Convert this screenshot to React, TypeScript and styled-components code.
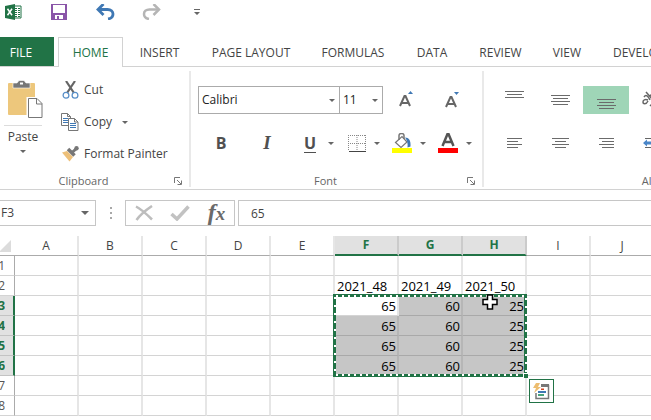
import React from "react";
import styled, { createGlobalStyle, css } from "styled-components";

const GREEN = "#217346";

const GlobalStyle = createGlobalStyle`
  *, *::before, *::after { box-sizing: border-box; }
  body {
    margin: 0;
    background: #fff;
    color: #444;
    font-family: "Open Sans", "Noto Sans", sans-serif;
    font-size: 12px;
    line-height: 16px;
    overflow: hidden;
  }
  button, input, select {
    font: inherit;
    color: inherit;
    margin: 0;
    padding: 0;
    border: 0;
    background: none;
    border-radius: 0;
    outline: 0;
  }
  svg { display: block; flex: none; }
`;

const Window = styled.div`
  display: flex;
  flex-direction: column;
  height: 100vh;
  overflow: hidden;
`;

const QuickBar = styled.header`
  display: flex;
  align-items: flex-start;
  gap: 26px;
  height: 37px;
  padding: 2px 3px;
`;

const QuickButton = styled.button`
  display: flex;
  width: 20px;
  height: 20px;
  align-items: center;
  justify-content: center;
`;

const TabBar = styled.nav`
  display: flex;
  height: 30px;
  flex: none;
  border-bottom: 1px solid #d2d2d2;
`;

const Tab = styled.button<{ $width: number; $kind?: "file" | "active" }>`
  flex: none;
  width: ${(p) => p.$width}px;
  height: 29px;
  padding-top: 2px;
  white-space: nowrap;
  color: #444;
  ${(p) =>
    p.$kind === "file" &&
    css`
      background: ${GREEN};
      color: #fff;
      margin-right: 4px;
      padding-right: 12px;
    `}
  ${(p) =>
    p.$kind === "active" &&
    css`
      height: 30px;
      padding-top: 0;
      color: ${GREEN};
      background: #fff;
      border: 1px solid #d2d2d2;
      border-bottom: 0;
    `}
`;

const Ribbon = styled.section`
  display: flex;
  flex: none;
  height: 123px;
  padding-top: 4px;
  border-bottom: 1px solid #d2d2d2;
`;

const Group = styled.section<{ $width?: number }>`
  display: flex;
  flex-direction: column;
  flex: ${(p) => (p.$width ? `0 0 ${p.$width}px` : "1 0 392px")};
  height: 116px;
  border-right: 2px solid #e9e9e9;
`;

const GroupBody = styled.div<{ $column?: boolean }>`
  display: flex;
  flex: 1;
  min-height: 0;
  flex-direction: ${(p) => (p.$column ? "column" : "row")};
`;

const GroupFooter = styled.footer`
  display: grid;
  grid-template-columns: 1fr 22px;
  align-items: center;
  height: 13px;
  font-size: 11px;
  line-height: 13px;
  color: #666;
  text-align: center;
`;

const Launcher = styled.button`
  display: flex;
  justify-content: center;
`;

const PasteButton = styled.button`
  display: flex;
  flex-direction: column;
  align-items: center;
  width: 46px;
  padding-top: 9px;
`;

const PasteLabel = styled.span`
  display: flex;
  flex-direction: column;
  align-items: center;
  gap: 5px;
  width: 38px;
  margin-top: 5px;
  padding-top: 3px;
  border-top: 1px solid #dcdcdc;
`;

const ClipboardList = styled.div`
  display: flex;
  flex-direction: column;
  padding: 3px 0 0 15px;
`;

const ClipboardCommand = styled.button`
  display: flex;
  align-items: center;
  gap: 5px;
  height: 32px;
  white-space: nowrap;
`;

const MenuMark = styled.span`
  padding-left: 5px;
`;

const FontFields = styled.div`
  display: flex;
  align-items: center;
  padding: 15px 0 0 7px;
  height: 43px;
`;

const Combo = styled.label<{ $width: number }>`
  display: flex;
  align-items: center;
  flex: none;
  width: ${(p) => p.$width}px;
  height: 28px;
  margin-right: -1px;
  padding: 0 4px 0 3px;
  border: 1px solid #ababab;
  color: #222;
`;

const ComboInput = styled.input`
  flex: 1;
  min-width: 0;
`;

const ToolButton = styled.button<{ $width: number }>`
  display: flex;
  align-items: center;
  justify-content: center;
  flex: none;
  width: ${(p) => p.$width}px;
  height: 28px;
`;

const SplitToolButton = styled.button<{ $gap?: number }>`
  display: flex;
  align-items: center;
  justify-content: flex-end;
  flex: none;
  gap: ${(p) => p.$gap ?? 8}px;
  width: 46px;
  height: 28px;
  padding-right: 2px;
`;

const FontTools = styled.div`
  display: flex;
  padding: 15px 0 0 7px;
`;

const Letter = styled.span<{ $style: "bold" | "italic" | "underline" }>`
  font-size: 16px;
  line-height: 18px;
  font-weight: 700;
  color: #505050;
  ${(p) =>
    p.$style === "italic" &&
    css`
      font-family: "Liberation Serif", serif;
      font-style: italic;
      font-size: 19px;
    `}
  ${(p) => p.$style === "underline" && css`border-bottom: 1px solid #505050;`}
`;

const AlignGrid = styled.div`
  display: grid;
  grid-template-columns: repeat(4, 46px);
  grid-auto-rows: 28px;
  row-gap: 15px;
  padding: 15px 0 0 7px;
`;

const AlignButton = styled.button<{ $on?: boolean }>`
  display: flex;
  align-items: center;
  justify-content: center;
  background: ${(p) => (p.$on ? "#9fd5b7" : "transparent")};
`;

const FormulaBar = styled.section`
  display: flex;
  flex: none;
  height: 46px;
  padding: 10px 0;
`;

const NameBox = styled.label`
  display: flex;
  align-items: center;
  width: 96px;
  height: 26px;
  padding: 0 6px 0 1px;
  border: 1px solid #c6c6c6;
  border-left: 0;
`;

const Grip = styled.div`
  display: flex;
  flex-direction: column;
  align-items: center;
  justify-content: center;
  gap: 3px;
  width: 29px;
  height: 26px;
`;

const Dot = styled.i`
  width: 2px;
  height: 2px;
  background: #a8a8a8;
`;

const FormulaButtons = styled.div`
  display: flex;
  align-items: center;
  justify-content: space-around;
  width: 110px;
  height: 26px;
  margin-right: 3px;
  border: 1px solid #c6c6c6;
`;

const FormulaInput = styled.input`
  flex: 1;
  min-width: 0;
  height: 26px;
  padding-left: 12px;
  border: 1px solid #c6c6c6;
  border-right: 0;
`;

const Sheet = styled.main`
  position: relative;
  flex: 1;
  overflow: hidden;
`;

const Grid = styled.table`
  table-layout: fixed;
  border-collapse: separate;
  border-spacing: 0;
  width: 655px;
`;

const Corner = styled.th`
  width: 15px;
  height: 20px;
  padding: 0;
  border-bottom: 1px solid #ababab;
`;

const ColumnHead = styled.th<{ $on: boolean }>`
  width: 64px;
  height: 20px;
  padding: 0;
  font-weight: ${(p) => (p.$on ? 700 : 400)};
  color: ${(p) => (p.$on ? GREEN : "#444")};
  background: ${(p) => (p.$on ? "#e1e1e1" : "#fff")};
  border-right: 2px solid ${(p) => (p.$on ? "#cbcbcb" : "#e6e6e6")};
  border-bottom: ${(p) => (p.$on ? `2px solid ${GREEN}` : "1px solid #ababab")};
`;

const RowHead = styled.th<{ $on: boolean }>`
  height: 20px;
  padding: 0;
  font-weight: ${(p) => (p.$on ? 700 : 400)};
  color: ${(p) => (p.$on ? GREEN : "#555")};
  background: ${(p) => (p.$on ? "#e1e1e1" : "#fff")};
  border-bottom: 1px solid ${(p) => (p.$on ? "#c3c3c3" : "#d4d4d4")};
  border-right: ${(p) => (p.$on ? `2px solid ${GREEN}` : "1px solid #ababab")};
`;

const RowNumber = styled.span`
  display: flex;
  justify-content: flex-end;
  width: 5px;
  overflow: hidden;
`;

const Cell = styled.td<{ $fill: "none" | "active" | "selected"; $numeric: boolean }>`
  height: 20px;
  padding: 2px 1px 1px 2px;
  font-size: 13px;
  line-height: 16px;
  color: #000;
  white-space: nowrap;
  text-align: ${(p) => (p.$numeric ? "right" : "left")};
  background: ${(p) => (p.$fill === "selected" ? "#c6c6c6" : "#fff")};
  border-right: 2px solid ${(p) => (p.$fill === "selected" ? "#b6b6b6" : "#e6e6e6")};
  border-bottom: 1px solid ${(p) => (p.$fill === "selected" ? "#a9a9a9" : "#d4d4d4")};
`;

const Marquee = styled.svg`
  position: absolute;
  left: 333px;
  top: 58px;
`;

const Pointer = styled.svg`
  position: absolute;
  left: 482px;
  top: 58px;
`;

const QuickAnalysis = styled.button`
  position: absolute;
  left: 529px;
  top: 143px;
  display: flex;
  align-items: center;
  justify-content: center;
  width: 25px;
  height: 24px;
  background: #fff;
  border: 1px solid ${GREEN};
`;

const Caret = ({ large }: { large?: boolean }) => (
  <svg width={large ? 8 : 6} height={large ? 4 : 3} viewBox="0 0 6 3" aria-hidden="true">
    <path d="M0 0h6L3 3z" fill="#666" />
  </svg>
);

const LauncherIcon = () => (
  <svg width="8" height="8" viewBox="0 0 8 8" fill="none" stroke="#777" aria-hidden="true">
    <path d="M.5 6V.5H6M3 3l4 4M7.5 3.5v4h-4" />
  </svg>
);

const ExcelIcon = () => (
  <svg width="17" height="16" viewBox="0 0 17 16" aria-hidden="true">
    <path d="M9 2h7v12H9z" fill="#fff" stroke="#217346" />
    <path d="M10 4h2v1h-2zM13 4h2v1h-2zM10 6h2v1h-2zM13 6h2v1h-2zM10 8h2v1h-2zM13 8h2v1h-2zM10 10h2v1h-2zM13 10h2v1h-2zM10 12h2v1h-2zM13 12h2v1h-2z" fill="#217346" />
    <path d="M0 2l10-2v16L0 14z" fill="#217346" />
    <path d="M2.5 4.8l4.500 6.400M7 4.800l-4.500 6.400" stroke="#fff" strokeWidth="1.500" />
  </svg>
);

const SaveIcon = () => (
  <svg width="16" height="16" viewBox="0 0 16 16" aria-hidden="true">
    <path d="M0 0h16v16H0z" fill="#8a55a8" />
    <path d="M2 1h12v8H2zM4 11h8v4H8v-3H6v3H4z" fill="#fff" />
  </svg>
);

const UndoIcon = () => (
  <svg width="19" height="16" viewBox="0 0 19 16" fill="none" stroke="#3f78b4" aria-hidden="true">
    <path d="M2 5.500h9.500c3.500 0 5.500 2 5.500 4.500 0 2.800-2 4.500-5 5" strokeWidth="2.800" />
    <path d="M7.500 0L2 5.500 7.500 11" strokeWidth="2.800" />
  </svg>
);

const RedoIcon = () => (
  <svg width="19" height="16" viewBox="0 0 19 16" fill="none" stroke="#b5b5b5" aria-hidden="true">
    <path d="M17 5.500H7.500C4 5.500 2 7.500 2 10c0 2.800 2 4.500 5 5" strokeWidth="2.500" />
    <path d="M11.500 0L17 5.500 11.500 11" strokeWidth="2.500" />
  </svg>
);

const CustomizeIcon = () => (
  <svg width="6" height="7" viewBox="0 0 6 7" aria-hidden="true">
    <path d="M0 0h6v1H0zM0 3h6L3 6z" fill="#666" />
  </svg>
);

const PasteIcon = () => (
  <svg width="42" height="40" viewBox="-6 -1 42 40" aria-hidden="true">
    <path d="M1 2h25q1 0 1 1v31H1q-1 0-1-1V3q0-1 1-1z" fill="#edc77c" />
    <path d="M5 7V2h4l2-2.500h5L18 2h4v5z" fill="#777" stroke="#fff" strokeWidth=".6" />
    <path d="M12 1.500h3v2h-3z" fill="#fff" />
    <path d="M20 17.500h9l5 5v13.500H20z" fill="#fff" stroke="#fff" strokeWidth="3" />
    <path d="M20.500 17.500h8.500l5 5v14H20.500zM28.500 17.500v5.500h5.500" fill="#fff" stroke="#777" />
  </svg>
);

const CutIcon = () => (
  <svg width="18" height="18" viewBox="0 0 18 18" fill="none" aria-hidden="true">
    <path d="M5 0l8 12M14 0L6 12" stroke="#666" strokeWidth="2.200" />
    <circle cx="5" cy="14.300" r="2.900" stroke="#5a90c8" strokeWidth="1.300" />
    <circle cx="14" cy="14.300" r="2.900" stroke="#5a90c8" strokeWidth="1.300" />
  </svg>
);

const CopyIcon = () => (
  <svg width="18" height="18" viewBox="0 0 18 18" aria-hidden="true">
    <path d="M.5.500h6l3 3v9H.500zM6.500.500v3h3" fill="#fff" stroke="#777" />
    <path d="M2 5.500h5M2 7.500h5M2 9.500h5" stroke="#3f78b4" />
    <path d="M7.500 5.500h6l3.500 3.500v8.500H7.500zM13.500 5.500V9H17" fill="#fff" stroke="#777" />
    <path d="M9 10.500h6M9 12.500h6M9 14.500h6" stroke="#3f78b4" />
  </svg>
);

const PainterIcon = () => (
  <svg width="18" height="16" viewBox="0 0 18 16" aria-hidden="true">
    <path d="M1 6.500l5-1.500 6 6-3.500 4.500z" fill="#edc07a" />
    <path d="M7 3l6.500 6.500" stroke="#777" strokeWidth="3.500" />
    <path d="M11 6.500l4.500-4" stroke="#777" strokeWidth="3" />
    <circle cx="15.500" cy="2.300" r="2.200" fill="#777" />
  </svg>
);

const FontSizeIcon = ({ grow }: { grow?: boolean }) => (
  <svg width="16" height="18" viewBox="0 0 16 18" aria-hidden="true">
    <path d={grow ? "M2 15L6.500 5h1L12 15M4 12h6" : "M2 16L6.500 6h1L12 16M4 13h6"} fill="none" stroke="#666" strokeWidth="2" />
    <path d={grow ? "M10 3h5l-2.500-3z" : "M10 1h5l-2.500 3z"} fill="#3f78b4" />
  </svg>
);

const BordersIcon = () => (
  <svg width="18" height="17" viewBox="0 0 18 17" fill="none" stroke="#888" aria-hidden="true">
    <path d="M0 .500h18M0 8.500h18M.500 0v16M9 0v16M17.500 0v16" strokeDasharray="1 1" />
    <path d="M1 16.500h17" stroke="#444" />
  </svg>
);

const FillIcon = () => (
  <svg width="20" height="20" viewBox="0 0 20 20" fill="none" aria-hidden="true">
    <path d="M3.500 9.500L10 3.500l5 5.500-6 5.500z" stroke="#777" strokeWidth="1.200" />
    <path d="M7 7V2.500C7-.2 12-.2 12 2.500V6" stroke="#777" strokeWidth="1.500" />
    <path d="M13 4.500c4 0 6 3 5.500 9l-3 1c.5-4-.2-7-2.500-10z" fill="#3f78b4" />
    <path d="M0 15h20v5H0z" fill="#ff0" />
  </svg>
);

const FontColorIcon = () => (
  <svg width="20" height="20" viewBox="0 0 20 20" fill="none" aria-hidden="true">
    <path d="M4.500 13L9.500 1h1l5 12M6.500 9h7" stroke="#555" strokeWidth="2.500" />
    <path d="M0 15h20v5H0z" fill="#f00" />
  </svg>
);

type Line = [number, number];
const LinesIcon = ({ lines, shift = 0 }: { lines: Line[]; shift?: number }) => (
  <svg width="19" height="24" viewBox="0 0 19 24" fill="none" stroke="#6b6b6b" aria-hidden="true">
    {lines.map(([x, w], i) => (
      <path key={i} d={`M${x} ${shift + i * 3 + 0.5}h${w}`} />
    ))}
  </svg>
);

const OrientationIcon = () => (
  <svg width="20" height="20" viewBox="0 0 20 20" fill="none" stroke="#666" strokeWidth="1.500" aria-hidden="true">
    <path d="M2 7c2-3 4-1 6 3M6 10c-3-1-5 0-5 2s3 3 5-1M4 2l8 9M8 6c2-3 5-1 4 1s-2 2-3 1" />
    <path d="M8 16L18 6" />
  </svg>
);

const IndentIcon = () => (
  <svg width="18" height="12" viewBox="0 0 18 12" fill="none" aria-hidden="true">
    <path d="M2 1.500h14M9 4.500h7M9 7.500h7M2 10.500h14" stroke="#666" />
    <path d="M0 6l4-3.500v2h4v3H4v2z" fill="#4a86c8" />
  </svg>
);

const CancelIcon = () => (
  <svg width="18" height="16" viewBox="0 0 18 16" fill="none" stroke="#bdbdbd" strokeWidth="2.500" aria-hidden="true">
    <path d="M1 1.500c6 3 11 8 16 13M17 1C11 5 5 10 1.500 15" />
  </svg>
);

const EnterIcon = () => (
  <svg width="20" height="16" viewBox="0 0 20 16" fill="none" stroke="#c2c2c2" strokeWidth="3.500" aria-hidden="true">
    <path d="M1.500 9l5.500 5L18.500 1.500" />
  </svg>
);

const FunctionLabel = styled.span`
  display: block;
  font: italic 700 24px/20px "Liberation Serif", serif;
  color: #6a6a6a;
`;

const FunctionX = styled.span`
  font-size: 19px;
`;

const QuickAnalysisIcon = () => (
  <svg width="17" height="17" viewBox="0 0 17 17" aria-hidden="true">
    <path d="M8 2.500h7.500v13H3V10" fill="#fff" stroke="#777" strokeWidth="1.500" />
    <path d="M8 1h8v3H8z" fill="#777" />
    <path d="M3 0h4L5 4h3L1 10l2-5H0z" fill="#edbd70" />
    <path d="M8 5.500h3v1.500H8z" fill="#d24726" />
    <path d="M5 8h8v2H5z" fill="#3f78b4" />
    <path d="M5 11h6v2H5z" fill="#4aa37c" />
  </svg>
);

const TABS: { name: string; width: number; kind?: "file" | "active" }[] = [
  { name: "FILE", width: 54, kind: "file" },
  { name: "HOME", width: 65, kind: "active" },
  { name: "INSERT", width: 73 },
  { name: "PAGE LAYOUT", width: 110 },
  { name: "FORMULAS", width: 94 },
  { name: "DATA", width: 64 },
  { name: "REVIEW", width: 73 },
  { name: "VIEW", width: 60 },
  { name: "DEVELOPER", width: 98 },
];

const COLUMNS = ["A", "B", "C", "D", "E", "F", "G", "H", "I", "J"];
const ROWS = [1, 2, 3, 4, 5, 6, 7, 8];
const HEADERS: Record<string, string> = { F: "2021_48", G: "2021_49", H: "2021_50" };
const VALUES: Record<string, string> = { F: "65", G: "60", H: "25" };

const isSelectedRow = (row: number) => row >= 3 && row <= 6;
const cellText = (col: string, row: number) =>
  row === 2 ? HEADERS[col] : isSelectedRow(row) ? VALUES[col] : undefined;
const cellFill = (col: string, row: number) => {
  if (!isSelectedRow(row) || !(col in VALUES)) return "none";
  return col === "F" && row === 3 ? "active" : "selected";
};

export default function App() {
  return (
    <>
      <GlobalStyle />
      <Window>
        <QuickBar>
          <QuickButton aria-label="Excel"><ExcelIcon /></QuickButton>
          <QuickButton aria-label="Save"><SaveIcon /></QuickButton>
          <QuickButton aria-label="Undo"><UndoIcon /></QuickButton>
          <QuickButton aria-label="Redo"><RedoIcon /></QuickButton>
          <QuickButton aria-label="Customize toolbar"><CustomizeIcon /></QuickButton>
        </QuickBar>
        <TabBar>
          {TABS.map((t) => (
            <Tab key={t.name} $width={t.width} $kind={t.kind}>{t.name}</Tab>
          ))}
        </TabBar>
        <Ribbon>
          <Group $width={191}>
            <GroupBody>
              <PasteButton>
                <PasteIcon />
                <PasteLabel>Paste<Caret /></PasteLabel>
              </PasteButton>
              <ClipboardList>
                <ClipboardCommand><CutIcon />Cut</ClipboardCommand>
                <ClipboardCommand><CopyIcon />Copy<MenuMark><Caret /></MenuMark></ClipboardCommand>
                <ClipboardCommand><PainterIcon />Format Painter</ClipboardCommand>
              </ClipboardList>
            </GroupBody>
            <GroupFooter>
              <span>Clipboard</span>
              <Launcher aria-label="Clipboard settings"><LauncherIcon /></Launcher>
            </GroupFooter>
          </Group>
          <Group $width={293}>
            <GroupBody $column>
              <FontFields>
                <Combo $width={142}>
                  <ComboInput aria-label="Font" defaultValue="Calibri" />
                  <Caret />
                </Combo>
                <Combo $width={44}>
                  <ComboInput aria-label="Font size" defaultValue="11" />
                  <Caret />
                </Combo>
                <ToolButton $width={48} aria-label="Increase font size"><FontSizeIcon grow /></ToolButton>
                <ToolButton $width={44} aria-label="Decrease font size"><FontSizeIcon /></ToolButton>
              </FontFields>
              <FontTools>
                <ToolButton $width={46} aria-label="Bold"><Letter $style="bold">B</Letter></ToolButton>
                <ToolButton $width={46} aria-label="Italic"><Letter $style="italic">I</Letter></ToolButton>
                <SplitToolButton $gap={12} aria-label="Underline"><Letter $style="underline">U</Letter><Caret /></SplitToolButton>
                <SplitToolButton aria-label="Borders"><BordersIcon /><Caret /></SplitToolButton>
                <SplitToolButton aria-label="Fill colour"><FillIcon /><Caret /></SplitToolButton>
                <SplitToolButton aria-label="Font colour"><FontColorIcon /><Caret /></SplitToolButton>
              </FontTools>
            </GroupBody>
            <GroupFooter>
              <span>Font</span>
              <Launcher aria-label="Font settings"><LauncherIcon /></Launcher>
            </GroupFooter>
          </Group>
          <Group>
            <GroupBody>
              <AlignGrid>
                <AlignButton aria-label="Top align"><LinesIcon shift={3} lines={[[0, 19], [2, 15], [0, 19]]} /></AlignButton>
                <AlignButton aria-label="Middle align"><LinesIcon shift={7} lines={[[0, 19], [2, 15], [0, 19], [2, 15]]} /></AlignButton>
                <AlignButton $on aria-label="Bottom align"><LinesIcon shift={11} lines={[[0, 19], [2, 15], [0, 19], [2, 15]]} /></AlignButton>
                <AlignButton aria-label="Orientation"><OrientationIcon /></AlignButton>
                <AlignButton aria-label="Align left"><LinesIcon shift={7} lines={[[2, 15], [2, 11], [2, 15], [2, 11]]} /></AlignButton>
                <AlignButton aria-label="Center"><LinesIcon shift={7} lines={[[1, 17], [4, 11], [1, 17], [4, 11]]} /></AlignButton>
                <AlignButton aria-label="Align right"><LinesIcon shift={7} lines={[[2, 15], [5, 12], [2, 15], [5, 12]]} /></AlignButton>
                <AlignButton aria-label="Decrease indent"><IndentIcon /></AlignButton>
              </AlignGrid>
            </GroupBody>
            <GroupFooter>
              <span>Alignment</span>
              <Launcher aria-label="Alignment settings"><LauncherIcon /></Launcher>
            </GroupFooter>
          </Group>
        </Ribbon>
        <FormulaBar>
          <NameBox>
            <ComboInput aria-label="Name box" defaultValue="F3" />
            <Caret large />
          </NameBox>
          <Grip><Dot /><Dot /><Dot /></Grip>
          <FormulaButtons>
            <button aria-label="Cancel"><CancelIcon /></button>
            <button aria-label="Enter"><EnterIcon /></button>
            <button aria-label="Insert function"><FunctionLabel>f<FunctionX>x</FunctionX></FunctionLabel></button>
          </FormulaButtons>
          <FormulaInput aria-label="Formula" defaultValue="65" />
        </FormulaBar>
        <Sheet>
          <Grid>
            <thead>
              <tr>
                <Corner aria-label="Select all">
                  <svg width="11" height="12" viewBox="0 0 11 12" aria-hidden="true"><path d="M11 0v12H-1z" fill="#dcdcdc" /></svg>
                </Corner>
                {COLUMNS.map((c) => <ColumnHead key={c} $on={c in VALUES}>{c}</ColumnHead>)}
              </tr>
            </thead>
            <tbody>
              {ROWS.map((r) => (
                <tr key={r}>
                  <RowHead $on={isSelectedRow(r)}><RowNumber>{r}</RowNumber></RowHead>
                  {COLUMNS.map((c) => (
                    <Cell key={c} $fill={cellFill(c, r)} $numeric={isSelectedRow(r)}>{cellText(c, r)}</Cell>
                  ))}
                </tr>
              ))}
            </tbody>
          </Grid>
          <Marquee width="196" height="84" viewBox="0 0 196 84" fill="none" aria-hidden="true">
            <path d="M1.500 1.500h191v80H1.500z" stroke={GREEN} strokeWidth="3" />
            <path d="M3 2h189M3 81h186" stroke="#fff" strokeWidth="2" strokeDasharray="2 4" />
            <path d="M2 3v78M193 4v74" stroke="#fff" strokeWidth="2" strokeDasharray="2 6" />
            <path d="M190 79h5v5h-5z" fill="#fff" />
            <path d="M191 80h4v4h-4z" fill={GREEN} />
          </Marquee>
          <Pointer width="16" height="16" viewBox="0 0 16 16" aria-hidden="true">
            <path d="M5.500 1h5v4.500H15v5h-4.500V15h-5v-4.500H1v-5h4.500z" fill="#fff" stroke="#000" strokeWidth="1.500" />
          </Pointer>
          <QuickAnalysis aria-label="Quick analysis"><QuickAnalysisIcon /></QuickAnalysis>
        </Sheet>
      </Window>
    </>
  );
}
